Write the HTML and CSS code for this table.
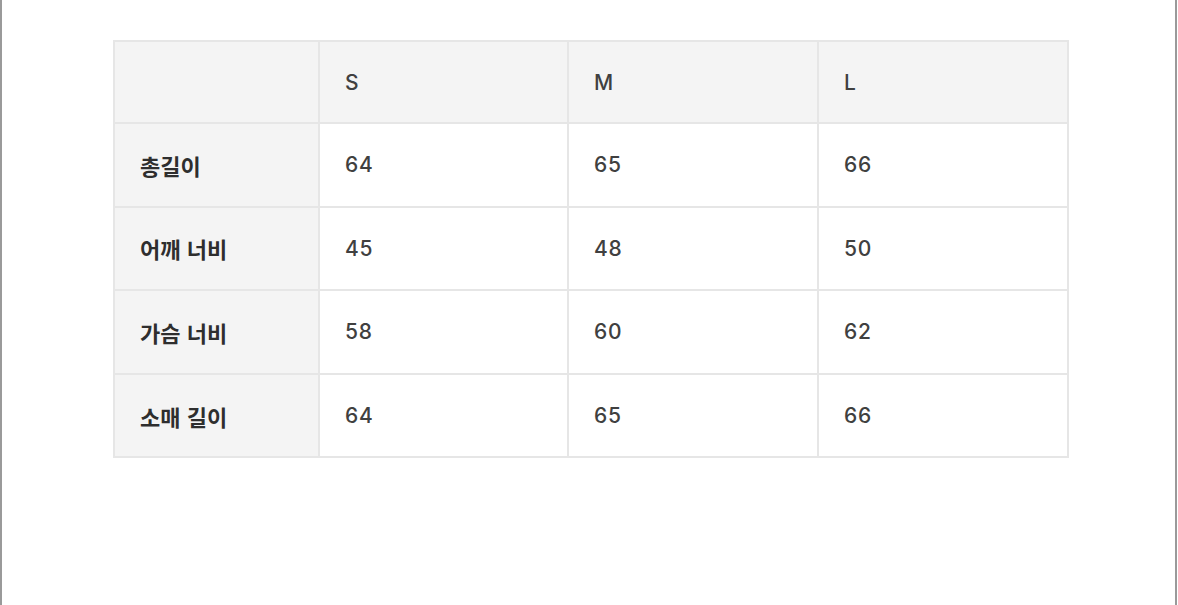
FILE: index.html
```html
<!DOCTYPE html>
<html lang="ko">
<head>
<meta charset="utf-8">
<link rel="stylesheet" href="styles.css">
</head>
<body>
<div class="frame">
  <table class="size-table">
    <colgroup>
      <col class="c-label"><col class="c-s"><col class="c-m"><col class="c-l">
    </colgroup>
    <thead>
      <tr><th class="label"></th><th>S</th><th>M</th><th>L</th></tr>
    </thead>
    <tbody>
      <tr><th class="label">총길이</th><td>64</td><td>65</td><td>66</td></tr>
      <tr><th class="label">어깨 너비</th><td>45</td><td>48</td><td>50</td></tr>
      <tr><th class="label">가슴 너비</th><td>58</td><td>60</td><td>62</td></tr>
      <tr><th class="label">소매 길이</th><td>64</td><td>65</td><td>66</td></tr>
    </tbody>
  </table>
</div>
</body>
</html>
```
FILE: styles.css
```css
html, body {
  margin: 0;
  padding: 0;
  background: #fff;
}
.frame {
  box-sizing: border-box;
  width: 1177px;
  height: 605px;
  border-left: 2px solid #9a9a9a;
  border-right: 2px solid #9a9a9a;
  padding: 40px 0 0 111px;
  font-family: "Inter", "Noto Sans CJK KR", sans-serif;
}
.size-table {
  border-collapse: collapse;
  table-layout: fixed;
  width: 954px;
}
.c-label { width: 205px; }
.c-s { width: 249px; }
.c-m { width: 250px; }
.c-l { width: 250px; }
.size-table th,
.size-table td {
  border: 2px solid #e6e6e6;
  height: 81.6px;
  padding: 0 0 0 25px;
  text-align: left;
  vertical-align: middle;
  font-size: 21px;
  letter-spacing: 0.8px;
  color: #404040;
  font-weight: 500;
}
.size-table thead th {
  height: 80px;
  background: #f4f4f4;
}
.size-table th.label {
  background: #f4f4f4;
  font-family: "Noto Sans CJK KR", sans-serif;
  font-size: 22px;
  letter-spacing: 0;
  font-weight: 700;
  color: #2e2e2e;
}
```
